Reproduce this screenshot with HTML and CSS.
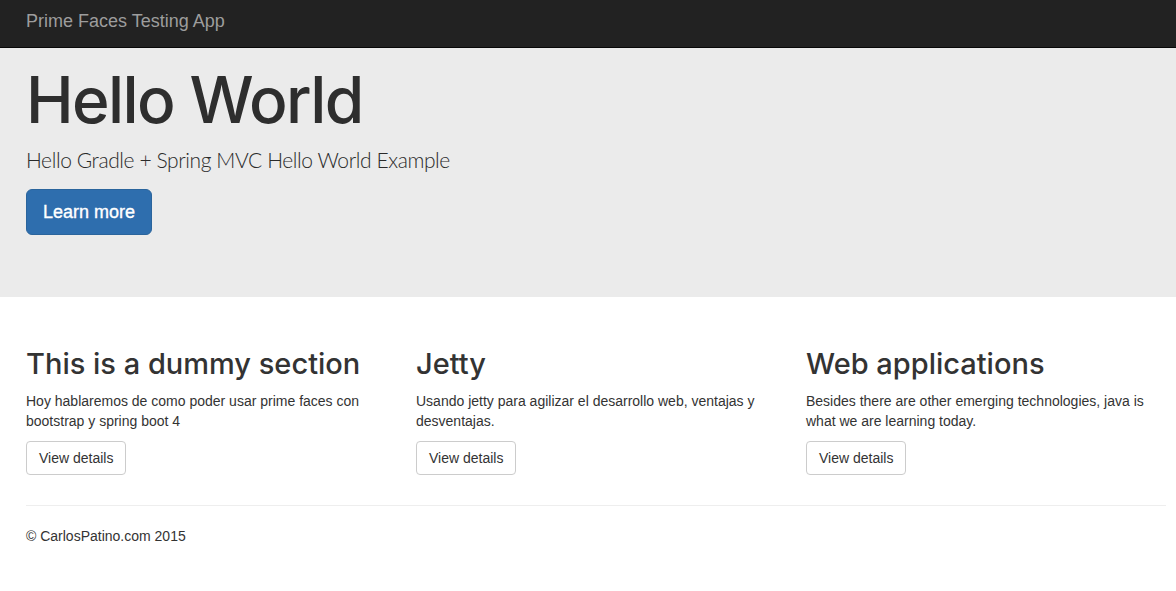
FILE: index.html
```html
<!DOCTYPE html>
<html lang="en">
<head>
<meta charset="utf-8">
<title>Prime Faces Testing App</title>
<link rel="stylesheet" href="styles.css">
</head>
<body>
<nav class="navbar">
  <div class="container">
    <a class="brand" href="#">Prime Faces Testing App</a>
  </div>
</nav>
<header class="jumbotron">
  <div class="container">
    <h1 class="jumbo-title">Hello World</h1>
    <p class="jumbo-lead">Hello Gradle + Spring MVC Hello World Example</p>
    <a class="btn btn-primary btn-lg" href="#">Learn more</a>
  </div>
</header>
<main class="container">
  <div class="row">
    <section class="col">
      <h2 class="col-title">This is a dummy section</h2>
      <p class="col-text">Hoy hablaremos de como poder usar prime faces con bootstrap y spring boot 4</p>
      <a class="btn btn-default" href="#">View details</a>
    </section>
    <section class="col">
      <h2 class="col-title">Jetty</h2>
      <p class="col-text">Usando jetty para agilizar el desarrollo web, ventajas y desventajas.</p>
      <a class="btn btn-default" href="#">View details</a>
    </section>
    <section class="col">
      <h2 class="col-title">Web applications</h2>
      <p class="col-text">Besides there are other emerging technologies, java is what we are learning today.</p>
      <a class="btn btn-default" href="#">View details</a>
    </section>
  </div>
  <hr class="divider">
  <footer class="footer">
    <p>&copy; CarlosPatino.com 2015</p>
  </footer>
</main>
</body>
</html>
```

FILE: styles.css
```css
* { box-sizing: border-box; }
html, body { margin: 0; padding: 0; }
body {
  font-family: "Liberation Sans", Arial, sans-serif;
  font-size: 14px;
  line-height: 20px;
  color: #333;
  background: #fff;
}
.container {
  width: 1140px;
  margin-left: 26px;
}
.navbar {
  height: 48px;
  background: #222;
  border-bottom: 1px solid #080808;
}
.navbar .container { padding-top: 11px; }
.brand {
  font-size: 18px;
  line-height: 20px;
  color: #9d9d9d;
  text-decoration: none;
}
.jumbotron {
  background: #ebebeb;
  padding: 16px 0 62px;
}
.jumbo-title {
  margin: 0;
  font-family: Inter, "Liberation Sans", sans-serif;
  font-size: 64px;
  line-height: 72px;
  font-weight: 500;
  letter-spacing: -1.6px;
  color: #2e2e2e;
}
.jumbo-lead {
  margin: 9px 0 14px;
  font-family: Lato, "Liberation Sans", sans-serif;
  font-weight: 300;
  font-size: 21px;
  line-height: 30px;
  letter-spacing: -0.4px;
  color: #2a2a2a;
}
.btn {
  display: inline-block;
  border: 1px solid transparent;
  text-decoration: none;
  white-space: nowrap;
}
.btn-lg {
  padding: 10px 16px;
  font-size: 18px;
  line-height: 24px;
  border-radius: 6px;
}
.btn-primary {
  background: #2e6eae;
  border-color: #2a649c;
  color: #fff;
  -webkit-text-stroke: 0.35px #fff;
}
.btn-default {
  padding: 6px 12px;
  font-size: 14px;
  line-height: 20px;
  border-radius: 4px;
  background: #fff;
  border-color: #ccc;
  color: #333;
}
.row {
  display: flex;
  gap: 30px;
  padding-top: 50px;
}
.col { width: 360px; }
.col-title {
  margin: 0 0 11px;
  font-family: Inter, "Liberation Sans", sans-serif;
  font-size: 29px;
  line-height: 33px;
  font-weight: 500;
  letter-spacing: 0;
  color: #333;
}
.col-text { margin: 0 0 10px; }
.divider {
  margin: 30px 0 20px;
  border: 0;
  border-top: 1px solid #eee;
}
.footer p { margin: 0; }
```
